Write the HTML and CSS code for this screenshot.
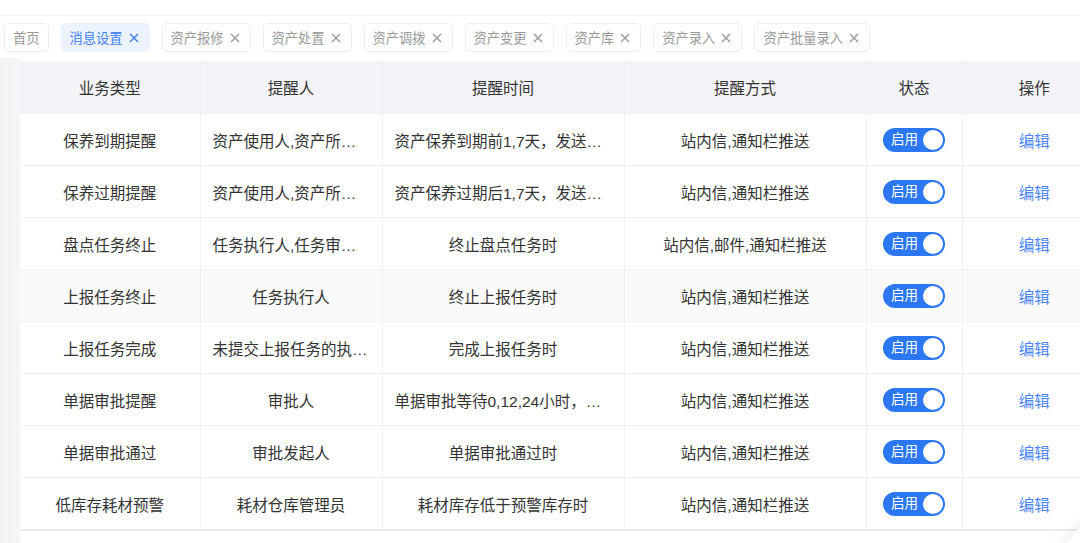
FILE: index.html
```html
<!DOCTYPE html>
<html lang="zh-CN">
<head>
<meta charset="utf-8">
<title>消息设置</title>
<link rel="stylesheet" href="styles.css">
</head>
<body>
<div class="page">
  <div class="topbar"></div>
  <div class="tabs">
    <div class="tab home">首页</div>
    <div class="tab active">消息设置<svg class="x" viewBox="0 0 10 10"><path d="M1 1L9 9M9 1L1 9"/></svg></div>
    <div class="tab">资产报修<svg class="x" viewBox="0 0 10 10"><path d="M1 1L9 9M9 1L1 9"/></svg></div>
    <div class="tab">资产处置<svg class="x" viewBox="0 0 10 10"><path d="M1 1L9 9M9 1L1 9"/></svg></div>
    <div class="tab">资产调拨<svg class="x" viewBox="0 0 10 10"><path d="M1 1L9 9M9 1L1 9"/></svg></div>
    <div class="tab">资产变更<svg class="x" viewBox="0 0 10 10"><path d="M1 1L9 9M9 1L1 9"/></svg></div>
    <div class="tab">资产库<svg class="x" viewBox="0 0 10 10"><path d="M1 1L9 9M9 1L1 9"/></svg></div>
    <div class="tab">资产录入<svg class="x" viewBox="0 0 10 10"><path d="M1 1L9 9M9 1L1 9"/></svg></div>
    <div class="tab">资产批量录入<svg class="x" viewBox="0 0 10 10"><path d="M1 1L9 9M9 1L1 9"/></svg></div>
  </div>
  <div class="main">
    <div class="side"></div>
    <div class="content">
      <table class="grid">
        <colgroup>
          <col class="c1"><col class="c2"><col class="c3"><col class="c4"><col class="c5"><col class="c6">
        </colgroup>
        <thead>
          <tr><th>业务类型</th><th>提醒人</th><th>提醒时间</th><th>提醒方式</th><th>状态</th><th>操作</th></tr>
        </thead>
        <tbody>
          <tr><td><div class="cell">保养到期提醒</div></td><td><div class="cell">资产使用人,资产所有人,资产管理员</div></td><td><div class="cell">资产保养到期前1,7天，发送提醒消息</div></td><td><div class="cell">站内信,通知栏推送</div></td><td><span class="switch"><span class="sw-text">启用</span><span class="knob"></span></span></td><td><a class="edit">编辑</a></td></tr>
          <tr><td><div class="cell">保养过期提醒</div></td><td><div class="cell">资产使用人,资产所有人,资产管理员</div></td><td><div class="cell">资产保养过期后1,7天，发送提醒消息</div></td><td><div class="cell">站内信,通知栏推送</div></td><td><span class="switch"><span class="sw-text">启用</span><span class="knob"></span></span></td><td><a class="edit">编辑</a></td></tr>
          <tr><td><div class="cell">盘点任务终止</div></td><td><div class="cell">任务执行人,任务审核人,任务发起人</div></td><td><div class="cell">终止盘点任务时</div></td><td><div class="cell">站内信,邮件,通知栏推送</div></td><td><span class="switch"><span class="sw-text">启用</span><span class="knob"></span></span></td><td><a class="edit">编辑</a></td></tr>
          <tr class="hover"><td><div class="cell">上报任务终止</div></td><td><div class="cell">任务执行人</div></td><td><div class="cell">终止上报任务时</div></td><td><div class="cell">站内信,通知栏推送</div></td><td><span class="switch"><span class="sw-text">启用</span><span class="knob"></span></span></td><td><a class="edit">编辑</a></td></tr>
          <tr><td><div class="cell">上报任务完成</div></td><td><div class="cell">未提交上报任务的执行人</div></td><td><div class="cell">完成上报任务时</div></td><td><div class="cell">站内信,通知栏推送</div></td><td><span class="switch"><span class="sw-text">启用</span><span class="knob"></span></span></td><td><a class="edit">编辑</a></td></tr>
          <tr><td><div class="cell">单据审批提醒</div></td><td><div class="cell">审批人</div></td><td><div class="cell">单据审批等待0,12,24小时，发送提醒消息</div></td><td><div class="cell">站内信,通知栏推送</div></td><td><span class="switch"><span class="sw-text">启用</span><span class="knob"></span></span></td><td><a class="edit">编辑</a></td></tr>
          <tr><td><div class="cell">单据审批通过</div></td><td><div class="cell">审批发起人</div></td><td><div class="cell">单据审批通过时</div></td><td><div class="cell">站内信,通知栏推送</div></td><td><span class="switch"><span class="sw-text">启用</span><span class="knob"></span></span></td><td><a class="edit">编辑</a></td></tr>
          <tr><td><div class="cell">低库存耗材预警</div></td><td><div class="cell">耗材仓库管理员</div></td><td><div class="cell">耗材库存低于预警库存时</div></td><td><div class="cell">站内信,通知栏推送</div></td><td><span class="switch"><span class="sw-text">启用</span><span class="knob"></span></span></td><td><a class="edit">编辑</a></td></tr>
        </tbody>
      </table>
    </div>
  </div>
  <div class="float-btn"></div>
</div>
</body>
</html>
```

FILE: styles.css
```css
html, body {
  margin: 0;
  padding: 0;
  background: #fff;
}
body {
  font-family: "Liberation Sans", "Noto Sans CJK SC", sans-serif;
  color: #333;
}
.page {
  position: relative;
  width: 1080px;
  height: 543px;
  overflow: hidden;
}
.topbar {
  height: 15px;
  border-bottom: 1px solid #f2f2f4;
}
.tabs {
  display: flex;
  gap: 12px;
  padding: 7px 0 6px 4px;
  height: 29px;
}
.tab {
  display: flex;
  align-items: center;
  gap: 6px;
  height: 29px;
  box-sizing: border-box;
  padding: 0 10px 0 8px;
  border: 1px solid #eeeef0;
  border-radius: 5px;
  font-size: 13.25px;
  color: #999;
  white-space: nowrap;
}
.tab.home {
  padding: 0 8px;
}
.tab.active {
  background: #edf3fe;
  border-color: #edf3fe;
  color: #3f7ef5;
}
.x {
  width: 10px;
  height: 10px;
  fill: none;
  stroke: #999;
  stroke-width: 1.4;
}
.tab.active .x {
  stroke: #3f7ef5;
}
.main {
  display: flex;
  height: 485px;
}
.side {
  width: 20px;
  flex: none;
  background: linear-gradient(to right, #f1f2f4, #f6f6f8);
}
.content {
  flex: none;
  padding-top: 3px;
}
.grid {
  border-collapse: collapse;
  table-layout: fixed;
  width: 1086px;
  font-size: 15.5px;
}
.c1 { width: 180px; }
.c2 { width: 182px; }
.c3 { width: 242px; }
.c4 { width: 242px; }
.c5 { width: 96px; }
.c6 { width: 144px; }
.grid th {
  height: 52px;
  background: #f3f3f8;
  font-weight: normal;
  color: #333;
  border-left: 1px solid #ececf1;
  border-bottom: 1px solid #efeff2;
  padding: 0;
}
.grid th:first-child { border-left: none; }
.grid td {
  height: 51px;
  padding: 0;
  text-align: center;
  border-left: 1px solid #f1f1f3;
  border-bottom: 1px solid #f1f1f3;
  color: #333;
}
.grid td:first-child { border-left: none; }
.grid tbody tr:last-child td { border-bottom: 2px solid #ebebed; }
.grid tr.hover td { background: #fafafa; }
.cell {
  padding: 0 12px;
  white-space: nowrap;
  overflow: hidden;
  text-overflow: ellipsis;
  text-align: center;
}
.switch {
  display: inline-flex;
  align-items: center;
  justify-content: space-between;
  width: 62px;
  height: 24px;
  box-sizing: border-box;
  padding: 0 2px 0 8px;
  border-radius: 12px;
  background: #2c78f4;
  vertical-align: middle;
}
.sw-text {
  color: #fff;
  font-size: 13.5px;
  line-height: 1;
}
.knob {
  width: 20px;
  height: 20px;
  border-radius: 50%;
  background: #fff;
}
.edit {
  color: #4a86f7;
  font-size: 15.5px;
  cursor: pointer;
}
.float-btn {
  position: absolute;
  left: 1060px;
  top: 518px;
  width: 100px;
  height: 100px;
  border-radius: 50%;
  background: #fff;
  box-shadow: 0 0 18px rgba(0, 0, 0, 0.09);
}
```
